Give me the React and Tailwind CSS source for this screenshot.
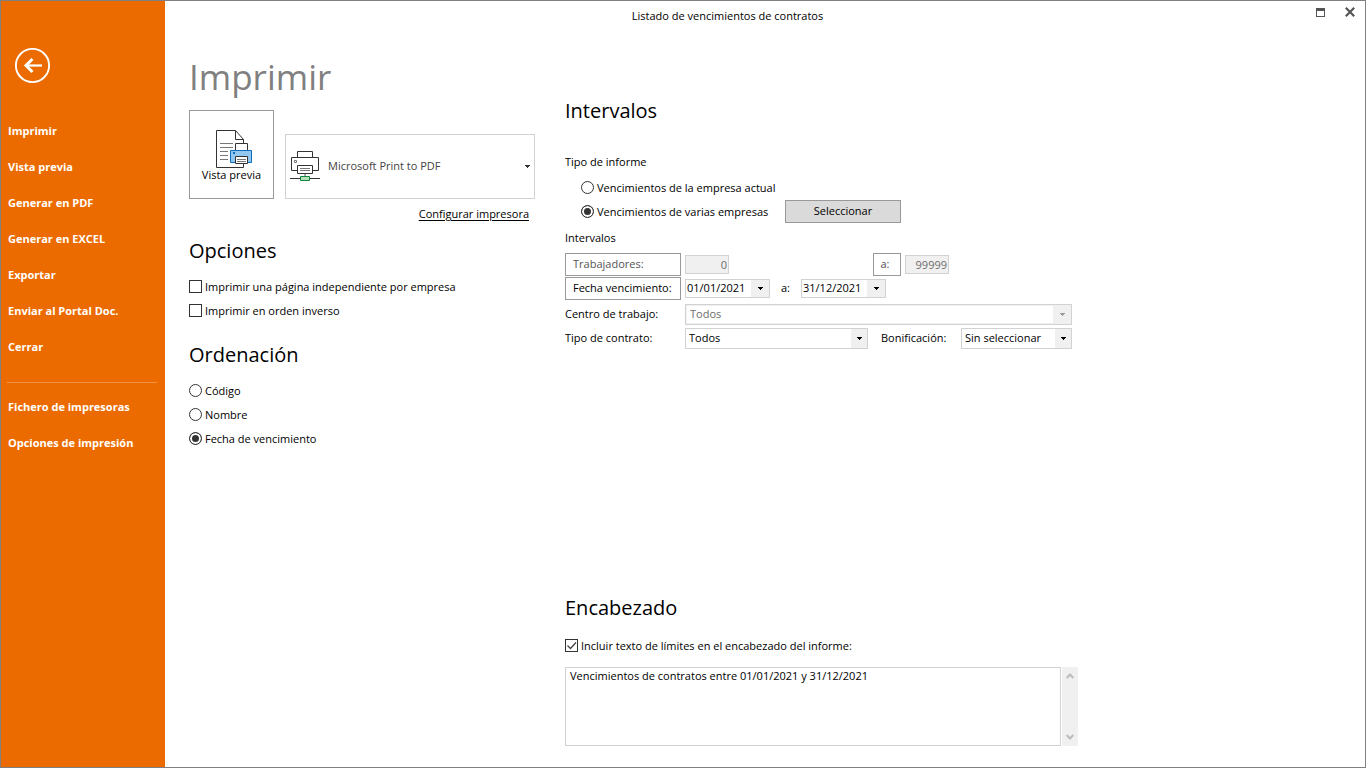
import React, { useState } from "react";
import clsx from "clsx";

const mainActions = [
  "Imprimir",
  "Vista previa",
  "Generar en PDF",
  "Generar en EXCEL",
  "Exportar",
  "Enviar al Portal Doc.",
  "Cerrar",
];

const setupActions = ["Fichero de impresoras", "Opciones de impresión"];

const Caret = ({ className }) => (
  <svg viewBox="0 0 5 3" className={clsx("h-[3px] w-[5px]", className)}>
    <path d="M0 0h5v1H4v1H3v1H2V2H1V1H0z" fill="currentColor" />
  </svg>
);

const PreviewIcon = () => (
  <svg viewBox="0 0 36 38" className="ml-1 h-[38px] w-9" fill="none">
    <path d="M0.5 0.5h19l8 9v28h-27z" fill="#fff" stroke="#333" />
    <path d="M19.5 0.5v9h8" stroke="#333" />
    <path d="M4 13.5h13M4 17.5h13M4 21.5h8M4 25.5h8M4 29.5h8" stroke="#777" />
    <path d="M19.5 20.5v-7h12v7" fill="#fff" stroke="#333" />
    <path d="M14.5 20.5h21v12h-21z" fill="#92c8f0" stroke="#0f6cbd" />
    <path d="M17 22h2v2h-2z" fill="#0f6cbd" />
    <path d="M19.5 26.5h12v7h-12z" fill="#fff" stroke="#333" />
    <path d="M21 29.5h9M21 31.5h9" stroke="#777" />
  </svg>
);

const PrinterIcon = ({ className }) => (
  <svg
    viewBox="0 0 30 31"
    className={clsx("h-[31px] w-[30px]", className)}
    fill="none"
  >
    <path d="M7.5 6.5v-6h15v6" fill="#fff" stroke="#333" />
    <path d="M1.5 6.5h27v13h-27z" fill="#fff" stroke="#333" />
    <path d="M4.5 9.5h2v2h-2z" stroke="#777" />
    <path d="M7.5 14.5h15v8h-15z" fill="#fff" stroke="#333" />
    <path d="M10 17.5h10M10 19.5h10" stroke="#777" />
    <path d="M15 23v3" stroke="#aaa" strokeWidth="2" />
    <path d="M0 27.5h30" stroke="#333" />
    <path d="M10.5 25.5h9v4h-9z" fill="#b5dfb9" stroke="#10893e" />
  </svg>
);

const Radio = ({ label, ...props }) => (
  <label className="flex h-6 items-center gap-[3px]">
    <input
      type="radio"
      className="mb-px size-[13px] shrink-0 appearance-none rounded-full border border-[#333] bg-white checked:bg-[#333] checked:shadow-[inset_0_0_0_2px_#fff]"
      {...props}
    />
    {label}
  </label>
);

const Checkbox = ({ label, ...props }) => (
  <label className="flex h-6 items-center gap-[3px]">
    <span className="mb-px grid size-[13px] shrink-0">
      <input
        type="checkbox"
        className="peer col-start-1 row-start-1 size-[13px] appearance-none border border-[#333] bg-white"
        {...props}
      />
      <svg
        viewBox="0 0 13 13"
        className="pointer-events-none invisible col-start-1 row-start-1 size-[13px] peer-checked:visible"
      >
        <path
          d="M2.5 6.5l3 3 5.5-6"
          fill="none"
          stroke="#444"
          strokeWidth="1.3"
        />
      </svg>
    </span>
    {label}
  </label>
);

const Select = ({ options, className, disabled, ...props }) => (
  <div
    className={clsx(
      "relative flex h-[21px] border border-[#d2d2d2]",
      disabled ? "bg-[#f0f0f0] p-px text-[#6d6d6d]" : "bg-white text-black",
      className,
    )}
  >
    <select
      disabled={disabled}
      className="min-w-0 flex-1 appearance-none bg-white pr-4 pl-[3px] leading-4 opacity-100"
      {...props}
    >
      {options.map((o) => (
        <option key={o}>{o}</option>
      ))}
    </select>
    <span
      className={clsx(
        "pointer-events-none absolute inset-y-0 right-0 flex items-center justify-center bg-[#f0f0f0]",
        disabled ? "w-[18px]" : "w-4",
      )}
    >
      <Caret className={disabled ? "text-[#9a9a9a]" : "text-black"} />
    </span>
  </div>
);

const DateField = ({ label, defaultValue }) => (
  <div className="flex h-[19px] w-[85px] border border-[#d2d2d2]">
    <input
      type="text"
      aria-label={label}
      defaultValue={defaultValue}
      className="min-w-0 flex-1 pl-px"
    />
    <button
      type="button"
      aria-label="Abrir calendario"
      className="flex w-[18px] items-center justify-center bg-[#f0f0f0]"
    >
      <Caret />
    </button>
  </div>
);

const NumberField = (props) => (
  <input
    type="text"
    disabled
    className="h-[19px] w-11 border border-[#d2d2d2] bg-[#f0f0f0] pr-px text-right text-[#6d6d6d]"
    {...props}
  />
);

const Heading = ({ children }) => (
  <h2 className="text-[20px] leading-8">{children}</h2>
);

const boxButton = "h-[23px] border border-[#999] bg-white";

const Sidebar = () => (
  <aside className="w-[164px] shrink-0 bg-[#eb6b00] font-bold text-white">
    <button type="button" aria-label="Volver" className="mt-[47px] ml-[14px] block">
      <svg viewBox="0 0 36 36" className="size-9" fill="none" stroke="#fff">
        <circle cx="17.5" cy="17.5" r="16.6" strokeWidth="1.9" />
        <path d="M10 17.5H27" strokeWidth="2.2" />
        <path d="M17.5 11l-6.5 6.5 6.5 6.5" strokeWidth="3" />
      </svg>
    </button>
    <nav className="mt-[29px]">
      {mainActions.map((action) => (
        <button
          key={action}
          type="button"
          className="block h-9 w-full pl-[7px] text-left"
        >
          {action}
        </button>
      ))}
      <hr className="mt-[17px] mr-2 mb-[6px] ml-[6px] border-[#f19142]" />
      {setupActions.map((action) => (
        <button
          key={action}
          type="button"
          className="block h-9 w-full pl-[7px] text-left"
        >
          {action}
        </button>
      ))}
    </nav>
  </aside>
);

const TitleBar = () => (
  <header className="flex h-[30px] items-center">
    <p className="flex-1 text-center">Listado de vencimientos de contratos</p>
    <div className="flex w-[75px] items-center justify-end gap-5 pr-[10px]">
      <button type="button" aria-label="Maximizar">
        <svg viewBox="0 0 9 9" className="mb-2 size-[9px]">
          <path d="M0 0h9v9H0zM1 3v5h7V3z" fill="#555" fillRule="evenodd" />
        </svg>
      </button>
      <button type="button" aria-label="Cerrar ventana">
        <svg viewBox="0 0 10 10" className="mb-2 size-[10px]">
          <path d="M0.8 0.8l8.4 8.4M9.2 0.8L0.8 9.2" stroke="#555" strokeWidth="2.2" />
        </svg>
      </button>
    </div>
  </header>
);

const PrintPanel = () => {
  const [order, setOrder] = useState("Fecha de vencimiento");

  return (
    <section className="w-[346px] shrink-0 pt-[22px]">
      <h1 className="text-[35px] leading-12 text-[#808080]">Imprimir</h1>
      <div className="mt-[9px] flex items-end gap-[11px]">
        <button
          type="button"
          className="flex h-[89px] w-[85px] shrink-0 flex-col items-center justify-center border border-[#999] pt-[2px]"
        >
          <PreviewIcon />
          <span className="leading-[14px]">Vista previa</span>
        </button>
        <div className="relative flex h-[65px] flex-1 items-center border border-[#d2d2d2]">
          <PrinterIcon className="pointer-events-none absolute left-1" />
          <select
            aria-label="Impresora"
            className="h-full w-full appearance-none pl-[42px] text-[#444]"
          >
            <option>Microsoft Print to PDF</option>
          </select>
          <Caret className="pointer-events-none absolute right-1 text-[#333]" />
        </div>
      </div>
      <div className="mt-1 flex h-[22px] items-center justify-end pr-[6px]">
        <a href="#impresora" className="underline underline-offset-2">
          Configurar impresora
        </a>
      </div>

      <div className="mt-[10px]">
        <Heading>Opciones</Heading>
        <div className="mt-2">
          <Checkbox label="Imprimir una página independiente por empresa" />
          <Checkbox label="Imprimir en orden inverso" />
        </div>
      </div>

      <div className="mt-4">
        <Heading>Ordenación</Heading>
        <div className="mt-2">
          {["Código", "Nombre", "Fecha de vencimiento"].map((o) => (
            <Radio
              key={o}
              name="orden"
              label={o}
              checked={order === o}
              onChange={() => setOrder(o)}
            />
          ))}
        </div>
      </div>
    </section>
  );
};

const FiltersPanel = () => (
  <section className="flex max-w-[513px] flex-1 flex-col pt-16 pb-[21px]">
    <Heading>Intervalos</Heading>
    <p className="mt-[23px] leading-6">Tipo de informe</p>
    <div className="mt-[2px] pl-4">
      <Radio name="tipo" label="Vencimientos de la empresa actual" />
      <div className="flex h-6 items-center">
        <div className="w-[204px]">
          <Radio name="tipo" label="Vencimientos de varias empresas" defaultChecked />
        </div>
        <button
          type="button"
          className="mb-px h-[23px] w-29 border border-[#999] bg-[#dadada]"
        >
          Seleccionar
        </button>
      </div>
    </div>
    <p className="mt-[2px] leading-6">Intervalos</p>

    <div className="mt-[3px] flex items-center gap-1">
      <button type="button" className={clsx(boxButton, "w-29 pl-[7px] text-left text-[#555]")}>
        Trabajadores:
      </button>
      <NumberField aria-label="Trabajadores desde" defaultValue="0" />
      <button type="button" className={clsx(boxButton, "ml-[140px] w-7 pr-1 text-[#555]")}>
        a:
      </button>
      <NumberField aria-label="Trabajadores hasta" defaultValue="99999" />
    </div>
    <div className="mt-px flex items-center gap-1">
      <button type="button" className={clsx(boxButton, "w-29 pl-[7px] text-left")}>
        Fecha vencimiento:
      </button>
      <DateField label="Fecha desde" defaultValue="01/01/2021" />
      <span className="w-[23px] text-center">a:</span>
      <DateField label="Fecha hasta" defaultValue="31/12/2021" />
    </div>
    <div className="mt-[2px] flex items-center pr-[6px]">
      <label htmlFor="centro" className="w-30 leading-6">
        Centro de trabajo:
      </label>
      <Select id="centro" options={["Todos"]} disabled className="flex-1" />
    </div>
    <div className="flex items-center pr-[6px]">
      <label htmlFor="contrato" className="w-30 leading-6">
        Tipo de contrato:
      </label>
      <Select id="contrato" options={["Todos"]} className="flex-1" />
      <label htmlFor="bonificacion" className="ml-[13px] w-20 leading-6">
        Bonificación:
      </label>
      <Select
        id="bonificacion"
        options={["Sin seleccionar"]}
        className="w-[111px]"
      />
    </div>

    <div className="mt-auto">
      <Heading>Encabezado</Heading>
      <div className="mt-[10px]">
        <Checkbox
          label="Incluir texto de límites en el encabezado del informe:"
          defaultChecked
        />
      </div>
      <div className="mt-[9px] flex h-[79px] gap-px">
        <textarea
          aria-label="Texto del encabezado"
          defaultValue="Vencimientos de contratos entre 01/01/2021 y 31/12/2021"
          className="flex-1 resize-none overflow-hidden border border-[#d2d2d2] px-1 leading-4"
        />
        <div className="flex w-4 flex-col justify-between bg-[#f0f0f0] py-[6px]">
          <button type="button" aria-label="Subir" className="flex justify-center">
            <svg viewBox="0 0 8 6" className="h-[6px] w-2">
              <path d="M0.7 5L4 1.5 7.3 5" fill="none" stroke="#bbb" strokeWidth="2" />
            </svg>
          </button>
          <button type="button" aria-label="Bajar" className="flex justify-center">
            <svg viewBox="0 0 8 6" className="h-[6px] w-2">
              <path d="M0.7 1L4 4.5 7.3 1" fill="none" stroke="#bbb" strokeWidth="2" />
            </svg>
          </button>
        </div>
      </div>
    </div>
  </section>
);

const App = () => (
  <div className="flex min-h-screen border border-[#808080] bg-white font-['Open_Sans',sans-serif] text-[11px] text-black">
    <Sidebar />
    <div className="flex flex-1 flex-col">
      <TitleBar />
      <main className="flex flex-1 gap-[30px] pl-6">
        <PrintPanel />
        <FiltersPanel />
      </main>
    </div>
  </div>
);

export default App;
